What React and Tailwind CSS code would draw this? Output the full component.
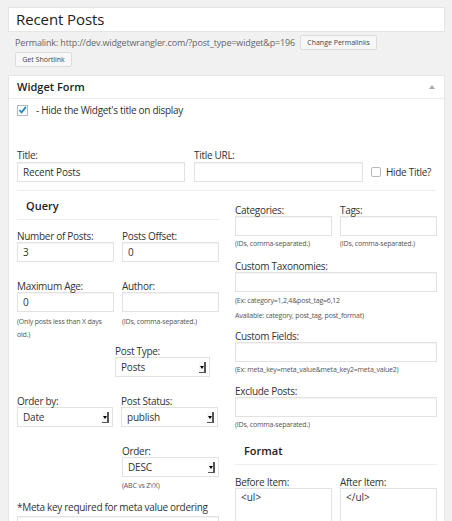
import React from 'react';

const font = { fontFamily: '"Open Sans", "Noto Sans", sans-serif' };

const Label = ({ children, className = '' }) => (
  <div className={`text-[10px] leading-[12px] tracking-[-0.3px] whitespace-nowrap text-[#333] ${className}`}>{children}</div>
);

const Help = ({ children, className = '' }) => (
  <div className={`text-[7px] leading-[12px] text-[#555] tracking-[-0.2px] ${className}`}>{children}</div>
);

const Input = ({ value = '', className = 'w-[97px]' }) => (
  <div className={`h-[20px] border border-[#e2e2e2] bg-white px-[5px] text-[10px] leading-[18px] tracking-[-0.2px] text-[#333] shadow-[inset_0_1px_1px_rgba(0,0,0,0.05)] ${className}`}>
    {value}
  </div>
);

const Select = ({ value, className = 'w-[97px]' }) => (
  <div className={`h-[20px] border border-[#e2e2e2] bg-white pl-[5px] pr-[3px] flex items-center justify-between text-[10px] tracking-[-0.2px] text-[#333] ${className}`}>
    <span>{value}</span>
    <span className="w-[7px] h-[11px] border-r-2 border-b border-[#555] bg-[#f6f6f6] flex items-center justify-center">
      <span className="block w-0 h-0 border-l-[2px] border-r-[2px] border-t-[3px] border-l-transparent border-r-transparent border-t-black mt-[2px]"></span>
    </span>
  </div>
);

const SectionHead = ({ children, className = '' }) => (
  <div className={`h-[29px] flex items-end pb-[6px] pl-[9px] border-b border-[#eeeeee] ${className}`}>
    <span className="text-[11px] leading-[14px] font-semibold text-[#222]">{children}</span>
  </div>
);

const TextArea = ({ value }) => (
  <div className="relative h-[40px] w-[97px] border border-[#e2e2e2] bg-white px-[5px] text-[10px] leading-[16px] text-[#333]">
    {value}
    <svg className="absolute right-[2px] bottom-[2px]" width="5" height="5" viewBox="0 0 5 5">
      <path d="M1 4.5 L4.5 1" stroke="#aaa" strokeWidth="0.8" />
    </svg>
  </div>
);

export default function App() {
  return (
    <div className="w-[452px] h-[521px] overflow-hidden bg-[#f1f1f1]" style={font}>
      <div className="pt-[7px] pl-[8px] pr-[7px]">
        {/* post title */}
        <div className="h-[25px] bg-white border border-[#e4e4e4] flex items-center pl-[7px] text-[15px] tracking-[-0.1px] text-[#222] leading-none">
          Recent Posts
        </div>

        {/* permalink */}
        <div className="pl-[7px] mt-[3px]">
          <div className="flex items-center h-[15px]">
            <span className="text-[9px] text-[#666] tracking-[-0.15px] whitespace-nowrap">
              Permalink: http://dev.widgetwrangler.com/?post_type=widget&amp;p=196
            </span>
            <span className="ml-[5px] h-[15px] w-[77px] text-center border border-[#dcdcdc] bg-[#f7f7f7] rounded-[2px] text-[7px] leading-[13px] text-[#444] whitespace-nowrap">
              Change Permalinks
            </span>
          </div>
          <div className="mt-[2px] h-[15px] w-[57px] border border-[#dcdcdc] bg-[#f7f7f7] rounded-[2px] text-[7px] leading-[13px] text-[#444] text-center whitespace-nowrap">
            Get Shortlink
          </div>
        </div>

        {/* widget form */}
        <div className="mt-[8px] bg-white border border-[#e5e5e5]">
          <div className="h-[23px] border-b border-[#eeeeee] flex items-center justify-between pl-[8px] pr-[9px]">
            <span className="text-[11px] font-semibold text-[#222]">Widget Form</span>
            <span className="w-0 h-0 border-l-[3px] border-r-[3px] border-b-[4px] border-l-transparent border-r-transparent border-b-[#aaa]"></span>
          </div>

          <div className="pl-[8px] pr-[8px]">
            <div className="flex items-center mt-[5px] h-[12px]">
              <span className="w-[11px] h-[11px] border border-[#b4b9be] bg-white flex items-center justify-center">
                <svg width="10" height="10" viewBox="0 0 10 10">
                  <path d="M1.5 5.2 L4 7.6 L8.8 1.5" fill="none" stroke="#1e8cbe" strokeWidth="2" />
                </svg>
              </span>
              <span className="ml-[8px] text-[10px] tracking-[-0.3px] text-[#333]">- Hide the Widget's title on display</span>
            </div>

            {/* title row */}
            <div className="flex items-end mt-[33px] pb-[8px] border-b border-[#eeeeee]">
              <div>
                <Label>Title:</Label>
                <Input value="Recent Posts" className="w-[168px] mt-[1px]" />
              </div>
              <div className="ml-[9px]">
                <Label>Title URL:</Label>
                <Input className="w-[169px] mt-[1px]" />
              </div>
              <div className="ml-[8px] h-[20px] flex items-center">
                <span className="w-[10px] h-[10px] border border-[#b4b9be] rounded-[2px] bg-white"></span>
                <span className="ml-[5px] text-[10px] tracking-[-0.3px] whitespace-nowrap text-[#333]">Hide Title?</span>
              </div>
            </div>

            {/* columns */}
            <div className="flex gap-[16px]">
              {/* left column */}
              <div className="w-[202px]">
                <SectionHead>Query</SectionHead>
                <div className="flex gap-[8px] mt-[10px]">
                  <div>
                    <Label>Number of Posts:</Label>
                    <Input value="3" />
                  </div>
                  <div>
                    <Label>Posts Offset:</Label>
                    <Input value="0" />
                  </div>
                </div>
                <div className="flex gap-[8px] mt-[18px]">
                  <div className="w-[97px]">
                    <Label>Maximum Age:</Label>
                    <Input value="0" />
                    <Help className="mt-[3px] leading-[13px]">(Only posts less than X days old.)</Help>
                  </div>
                  <div>
                    <Label>Author:</Label>
                    <Input />
                    <Help className="mt-[3px] leading-[13px]">(IDs, comma-separated.)</Help>
                  </div>
                </div>
                <div className="ml-[98px] mt-[4px]">
                  <Label>Post Type:</Label>
                  <Select value="Posts" className="w-[95px]" />
                </div>
                <div className="flex gap-[8px] mt-[18px]">
                  <div>
                    <Label>Order by:</Label>
                    <Select value="Date" className="w-[96px]" />
                  </div>
                  <div>
                    <Label>Post Status:</Label>
                    <Select value="publish" />
                  </div>
                </div>
                <div className="ml-[105px] mt-[18px]">
                  <Label>Order:</Label>
                  <Select value="DESC" />
                  <Help className="mt-[3px]">(ABC vs ZYX)</Help>
                </div>
                <Label className="mt-[9px] leading-[13px]">*Meta key required for meta value ordering</Label>
                <Input className="w-[202px] mt-[2px]" />
              </div>

              {/* right column */}
              <div className="w-[202px]">
                <div className="flex gap-[8px] mt-[13px]">
                  <div>
                    <Label>Categories:</Label>
                    <Input />
                    <Help className="mt-[2px]">(IDs, comma-separated.)</Help>
                  </div>
                  <div>
                    <Label>Tags:</Label>
                    <Input />
                    <Help className="mt-[2px]">(IDs, comma-separated.)</Help>
                  </div>
                </div>
                <Label className="mt-[10px]">Custom Taxonomies:</Label>
                <Input className="w-[202px]" />
                <Help className="mt-[2px] leading-[14px]">(Ex: category=1,2,4&amp;post_tag=6,12</Help>
                <Help className="leading-[16px]">Available: category, post_tag, post_format)</Help>
                <Label className="mt-[6px]">Custom Fields:</Label>
                <Input className="w-[202px]" />
                <Help className="mt-[2px]">(Ex: meta_key=meta_value&amp;meta_key2=meta_value2)</Help>
                <Label className="mt-[9px]">Exclude Posts:</Label>
                <Input className="w-[202px]" />
                <Help className="mt-[2px]">(IDs, comma-separated.)</Help>
                <SectionHead className="mt-[5px]">Format</SectionHead>
                <div className="flex gap-[8px] mt-[11px]">
                  <div>
                    <Label>Before Item:</Label>
                    <TextArea value="<ul>" />
                  </div>
                  <div>
                    <Label>After Item:</Label>
                    <TextArea value="</ul>" />
                  </div>
                </div>
              </div>
            </div>
          </div>
        </div>
      </div>
    </div>
  );
}
